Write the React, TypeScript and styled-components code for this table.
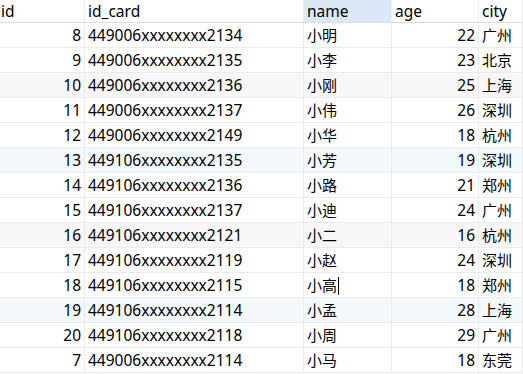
import React from 'react';
import styled, { createGlobalStyle } from 'styled-components';

const rows = [
  [8, '449006xxxxxxxx2134', '小明', 22, '广州'],
  [9, '449006xxxxxxxx2135', '小李', 23, '北京'],
  [10, '449006xxxxxxxx2136', '小刚', 25, '上海'],
  [11, '449006xxxxxxxx2137', '小伟', 26, '深圳'],
  [12, '449006xxxxxxxx2149', '小华', 18, '杭州'],
  [13, '449106xxxxxxxx2135', '小芳', 19, '深圳'],
  [14, '449106xxxxxxxx2136', '小路', 21, '郑州'],
  [15, '449106xxxxxxxx2137', '小迪', 24, '广州'],
  [16, '449106xxxxxxxx2121', '小二', 16, '杭州'],
  [17, '449106xxxxxxxx2119', '小赵', 24, '深圳'],
  [18, '449106xxxxxxxx2115', '小高', 18, '郑州'],
  [19, '449106xxxxxxxx2114', '小孟', 28, '上海'],
  [20, '449106xxxxxxxx2118', '小周', 29, '广州'],
  [7, '449006xxxxxxxx2114', '小马', 18, '东莞'],
];

// row tints seen in the grid
const tint = (i: number) => (i === 5 || i === 11 ? 'blue' : i === 2 || i === 8 ? 'gray' : 'none');

const GlobalStyle = createGlobalStyle`
  html, body {
    margin: 0;
    background: #fff;
  }
  body {
    font-family: "Noto Sans", "Noto Sans CJK SC", sans-serif;
    font-size: 15.5px;
    color: #000;
  }
`;

const Grid = styled.div`
  width: 523px;
  height: 374px;
  overflow: hidden;
`;

const Row = styled.div<{ $tint?: string }>`
  display: grid;
  grid-template-columns: 85px 219px 88px 87px 1fr;
  background: ${p => (p.$tint === 'blue' ? '#f3f8fd' : p.$tint === 'gray' ? '#f7f7f7' : '#fff')};
`;

const HeadCell = styled.div<{ $active?: boolean }>`
  height: 22px;
  line-height: 22px;
  padding: 0 3px;
  border-bottom: 1px solid #dedede;
  border-right: 1px solid #eeeeee;
  background: ${p => (p.$active ? '#dbe9f7' : '#fff')};
  white-space: nowrap;
  overflow: hidden;
`;

const FirstHead = styled(HeadCell)`
  padding-left: 1px;
`;

const Cell = styled.div<{ $right?: boolean }>`
  height: 24px;
  line-height: 24px;
  padding: 0 3px;
  border-bottom: 1px solid #ebebeb;
  border-right: 1px solid #ebebeb;
  text-align: ${p => (p.$right ? 'right' : 'left')};
  white-space: nowrap;
  overflow: hidden;
`;

const CjkCell = styled(Cell)`
  font-size: 15px;
`;

const Caret = styled.span`
  display: inline-block;
  width: 1px;
  height: 18px;
  margin-left: 1px;
  background: #000;
  vertical-align: -4px;
`;

export default function App() {
  return (
    <>
      <GlobalStyle />
      <Grid>
        <Row>
          <FirstHead>id</FirstHead>
          <HeadCell>id_card</HeadCell>
          <HeadCell $active>name</HeadCell>
          <HeadCell>age</HeadCell>
          <HeadCell>city</HeadCell>
        </Row>
        {rows.map((r, i) => (
          <Row key={i} $tint={tint(i)}>
            <Cell $right>{r[0]}</Cell>
            <Cell>{r[1]}</Cell>
            <CjkCell>
              {r[2]}
              {r[2] === '小高' && <Caret />}
            </CjkCell>
            <Cell $right>{r[3]}</Cell>
            <CjkCell>{r[4]}</CjkCell>
          </Row>
        ))}
      </Grid>
    </>
  );
}
